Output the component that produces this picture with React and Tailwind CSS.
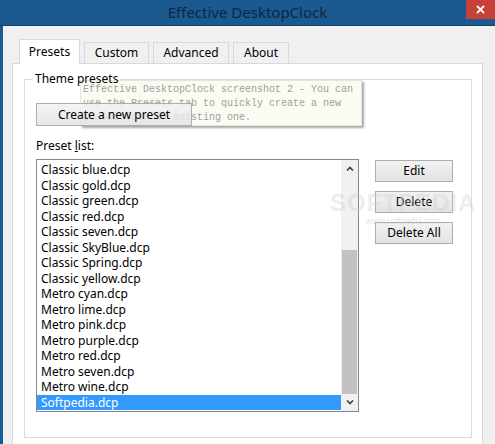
import React from "react";

const presets = [
  "Classic blue.dcp",
  "Classic gold.dcp",
  "Classic green.dcp",
  "Classic red.dcp",
  "Classic seven.dcp",
  "Classic SkyBlue.dcp",
  "Classic Spring.dcp",
  "Classic yellow.dcp",
  "Metro cyan.dcp",
  "Metro lime.dcp",
  "Metro pink.dcp",
  "Metro purple.dcp",
  "Metro red.dcp",
  "Metro seven.dcp",
  "Metro wine.dcp",
  "Softpedia.dcp",
];

const tabs = ["Presets", "Custom", "Advanced", "About"];

function WinButton({ children, className = "" }) {
  return (
    <button
      className={`flex items-center justify-center border border-[#adadad] bg-gradient-to-b from-[#f2f2f2] to-[#e3e3e3] text-[12px] text-black ${className}`}
    >
      {children}
    </button>
  );
}

export default function App() {
  return (
    <div
      className="relative w-[495px] h-[444px] overflow-hidden bg-[#1b5a90] text-black"
      style={{ fontFamily: '"Segoe UI", "Noto Sans", sans-serif' }}
    >
      {/* title bar */}
      <div className="relative h-[26px] flex items-center justify-center border-b border-[#12406a]">
        <span className="text-[15px] text-[#0c2740] leading-none">Effective DesktopClock</span>
        <div className="absolute right-0 top-0 w-[29px] h-[19px] bg-[#c7403a] flex items-center justify-center">
          <svg width="9" height="9" viewBox="0 0 9 9">
            <path d="M1 1 L8 8 M8 1 L1 8" stroke="white" strokeWidth="1.8" />
          </svg>
        </div>
      </div>

      {/* window body */}
      <div className="ml-[3px] h-[418px] bg-[#f0f0f0] pl-[9px] pr-[12px] pt-[13px]">
        {/* tabs */}
        <div className="flex items-end h-[24px] pl-[7px] gap-[4px]">
          {tabs.map((t, i) =>
            i === 0 ? (
              <div
                key={t}
                className="relative z-10 h-[25px] w-[61px] -mb-px bg-white border border-b-0 border-[#d9d9d9] flex items-center justify-center text-[12px]"
              >
                {t}
              </div>
            ) : (
              <div
                key={t}
                className={`h-[21px] border border-b-0 border-[#d9d9d9] bg-[#f0f0f0] flex items-center justify-center text-[12px] ${
                  i === 1 ? "w-[65px]" : i === 2 ? "w-[76px]" : "w-[56px]"
                }`}
              >
                {t}
              </div>
            )
          )}
        </div>

        {/* tab panel */}
        <div className="h-[400px] bg-white border border-[#d9d9d9] pl-[11px] pr-[10px] pt-[8px]">
          {/* group box */}
          <fieldset className="relative h-[366px] border border-[#dcdcdc] pl-[11px] pr-[10px]">
            <legend className="relative z-30 ml-[-3px] px-[2px] text-[12px] leading-[14px]">Theme presets</legend>

            <WinButton className="mt-[17px] w-[156px] h-[23px] relative z-30 from-[#f2f2f2]/85 to-[#e3e3e3]/85">
              Create a new preset
            </WinButton>

            <div className="mt-[12px] text-[12px] leading-[15px]">
              Preset <span className="underline">l</span>ist:
            </div>

            <div className="mt-[6px] flex items-start">
              {/* list box */}
              <div className="w-[323px] h-[253px] border border-[#828790] bg-white flex">
                <div className="flex-1 pt-[2px]">
                  {presets.map((p, i) => (
                    <div
                      key={p}
                      className={`h-[15.5px] pl-[4px] text-[12px] leading-[15px] whitespace-nowrap ${
                        i === presets.length - 1 ? "bg-[#3399ff] text-white" : ""
                      }`}
                    >
                      {p}
                    </div>
                  ))}
                </div>
                {/* scrollbar */}
                <div className="w-[17px] bg-[#f0f0f0] flex flex-col">
                  <div className="h-[17px] flex items-center justify-center">
                    <svg width="8" height="5" viewBox="0 0 8 5">
                      <path d="M1 4.5 L4 1.5 L7 4.5" stroke="#404040" strokeWidth="1.6" fill="none" />
                    </svg>
                  </div>
                  <div className="flex-1 flex flex-col">
                    <div className="h-[73px]" />
                    <div className="flex-1 mx-[1px] bg-[#c2c2c2]" />
                  </div>
                  <div className="h-[17px] flex items-center justify-center">
                    <svg width="8" height="5" viewBox="0 0 8 5">
                      <path d="M1 0.5 L4 3.5 L7 0.5" stroke="#404040" strokeWidth="1.6" fill="none" />
                    </svg>
                  </div>
                </div>
              </div>

              {/* side buttons */}
              <div className="ml-[16px] mt-[1px] flex flex-col gap-[9px]">
                <WinButton className="w-[78px] h-[22px]">Edit</WinButton>
                <WinButton className="w-[78px] h-[22px]">Delete</WinButton>
                <WinButton className="w-[78px] h-[22px]">Delete All</WinButton>
              </div>
            </div>
          </fieldset>
        </div>
      </div>

      {/* tooltip, fading out behind the button */}
      <div className="absolute left-[80px] top-[80px] w-[282px] h-[46px] bg-[#fbfbf2] border border-[#e4e4e4] shadow-[2px_2px_2px_rgba(0,0,0,0.35)] px-[2px] pt-[2px] z-20">
        <div
          className="text-[10px] leading-[14px] text-[#a0a0a0] whitespace-pre"
          style={{ fontFamily: '"Liberation Mono", monospace' }}
        >
          {"Effective DesktopClock screenshot 2 - You can\nuse the Presets tab to quickly create a new\npreset from an existing one."}
        </div>
      </div>

      {/* watermark */}
      <div className="absolute left-[330px] top-[190px] z-20 pointer-events-none text-center">
        <div
          className="text-[24px] leading-[26px] font-bold tracking-[1px] text-[#cfcfcf]/40"
          style={{ fontFamily: '"Liberation Sans", sans-serif' }}
        >
          SOFTPEDIA
        </div>
        <div className="text-[8px] leading-[10px] text-[#c8c8c8]/50">www.softpedia.com</div>
      </div>
    </div>
  );
}
